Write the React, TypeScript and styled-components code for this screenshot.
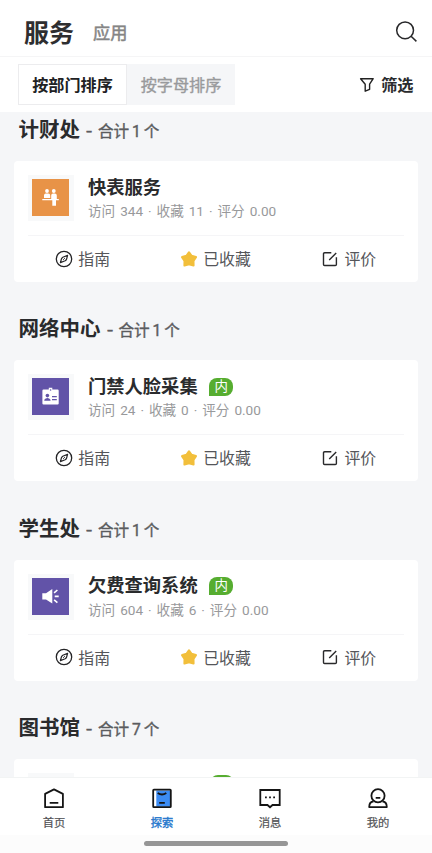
import React from 'react';
import styled, { createGlobalStyle } from 'styled-components';

const GlobalStyle = createGlobalStyle`
  * { box-sizing: border-box; }
  body { margin: 0; background: #f5f6f8; }
`;

const Screen = styled.div`
  width: 432px;
  height: 853px;
  display: flex;
  flex-direction: column;
  overflow: hidden;
  background: #f5f6f8;
  color: #2a2b2d;
  font-family: Roboto, "Noto Sans CJK SC", sans-serif;
  white-space: nowrap;
  svg { display: block; flex: none; }
`;

const Header = styled.header`
  height: 57px;
  flex: none;
  display: flex;
  align-items: center;
  padding: 9px 14px 0 24px;
  background: #fff;
  border-bottom: 1px solid #f5f5f6;
`;

const HeaderTitle = styled.h1`
  margin: 0;
  padding-top: 3px;
  font-size: 25px;
  line-height: 36px;
  font-weight: 700;
  color: #2e2e30;
`;

const HeaderTab = styled.span`
  margin-left: 19px;
  padding-top: 1px;
  flex: 1;
  font-size: 17.2px;
  line-height: 26px;
  color: #858585;
  -webkit-text-stroke: 0.5px;
`;

const FilterBar = styled.div`
  height: 55px;
  flex: none;
  display: flex;
  align-items: center;
  justify-content: space-between;
  padding: 0 18.5px 0 18px;
  background: #fff;
`;

const Segments = styled.div`
  display: flex;
`;

const Segment = styled.button<{ $active?: boolean }>`
  width: ${(p) => (p.$active ? 109 : 108)}px;
  height: 41px;
  padding: 0 0 1px;
  border: 1px solid ${(p) => (p.$active ? '#ececee' : '#f5f6f8')};
  background: ${(p) => (p.$active ? '#fff' : '#f5f6f8')};
  color: ${(p) => (p.$active ? '#202123' : '#999a9c')};
  font: ${(p) => (p.$active ? 700 : 400)} 16.1px Roboto, "Noto Sans CJK SC", sans-serif;
  -webkit-text-stroke: ${(p) => (p.$active ? 0 : 0.4)}px;
`;

const FilterButton = styled.div`
  display: flex;
  align-items: center;
  gap: 6px;
  padding-bottom: 1px;
  font-size: 16.2px;
  font-weight: 700;
  svg { margin-top: 1px; }
`;

const List = styled.main`
  flex: 1;
  min-height: 0;
  overflow: hidden;
`;

const Section = styled.section`
  height: 199.3px;
`;

const SectionHead = styled.h2`
  height: 49px;
  margin: 0;
  padding: 4px 0 0 18.5px;
  display: flex;
  align-items: baseline;
  font-size: 20.5px;
  line-height: 29px;
  font-weight: 700;
`;

const Count = styled.span`
  display: flex;
  align-items: baseline;
  font-size: 15.6px;
  font-weight: 400;
  color: #5b5c5f;
  -webkit-text-stroke: 0.4px;
`;

const Dash = styled.span`
  width: 18px;
  text-align: center;
  transform: scaleX(1.3);
`;

const Digit = styled.b`
  width: 14.5px;
  text-align: center;
  font-weight: 400;
`;

const Card = styled.article`
  height: 121px;
  margin: 0 14px;
  padding: 0 14px;
  border-radius: 4px;
  background: #fff;
`;

const CardTop = styled.div`
  display: flex;
  height: 75px;
  padding-top: 14px;
  border-bottom: 1px solid #f5f5f7;
`;

const IconFrame = styled.div`
  width: 46px;
  height: 46px;
  flex: none;
  padding: 4px;
  background: #f8f9fa;
`;

const IconTile = styled.div<{ $color: string }>`
  width: 37px;
  height: 37px;
  background: ${(p) => p.$color};
`;

const Info = styled.div`
  margin-left: 14px;
`;

const TitleRow = styled.div`
  display: flex;
  align-items: center;
  height: 25px;
  font-size: 18.3px;
  line-height: 26px;
  font-weight: 700;
`;

const Badge = styled.span`
  width: 24px;
  height: 18px;
  margin-left: 11.5px;
  border-radius: 8px 8px 8px 0;
  background: #56ad30;
  color: #fff;
  font-size: 13.5px;
  font-weight: 400;
  line-height: 17px;
  text-align: center;
`;

const Meta = styled.div`
  height: 22px;
  font-size: 13.6px;
  line-height: 22px;
  word-spacing: 1.6px;
  color: #98999b;
`;

const Actions = styled.div`
  display: grid;
  grid-template-columns: repeat(3, 1fr);
  height: 46px;
`;

const Action = styled.div`
  display: flex;
  align-items: center;
  justify-content: center;
  gap: 5px;
  padding: 0 16px 1px 0;
  font-size: 15.9px;
  color: #55565a;
  &:nth-child(2) { padding-right: 1px; padding-left: 0; }
  &:nth-child(3) { gap: 6px; padding-right: 0; padding-left: 16px; }
`;

const Nav = styled.nav`
  height: 58px;
  flex: none;
  display: grid;
  grid-template-columns: repeat(4, 1fr);
  background: #fff;
  border-top: 1px solid #f2f4f4;
`;

const NavItem = styled.div<{ $active?: boolean }>`
  display: flex;
  flex-direction: column;
  align-items: center;
  padding-top: 9px;
  font-size: 11.3px;
  line-height: 16px;
  color: ${(p) => (p.$active ? '#2879cd' : '#525356')};
  -webkit-text-stroke: ${(p) => (p.$active ? 0.4 : 0.2)}px;
  svg { margin-bottom: 7px; }
`;

const HomeArea = styled.div`
  height: 18px;
  flex: none;
  display: flex;
  justify-content: center;
  padding-top: 6px;
  background: #fcfcfc;
`;

const HomeBar = styled.div`
  width: 144px;
  height: 5px;
  border-radius: 3px;
  background: #969696;
`;

const SearchIcon = () => (
  <svg width="24" height="24" viewBox="0 0 24 24" fill="none" stroke="#28282a" strokeWidth="1.5">
    <circle cx="11.1" cy="9.3" r="8.4" />
    <path d="M17.1 15.3 22.4 20.4" />
  </svg>
);

const FunnelIcon = () => (
  <svg width="16" height="16" viewBox="0 0 16 16" fill="none" stroke="#222" strokeWidth="1.4" strokeLinejoin="round">
    <path d="M1.6 1.7H14.2L10.6 7.2V12.3L6.2 14.2V7.2Z" />
  </svg>
);

const CompassIcon = () => (
  <svg width="18" height="18" viewBox="0 0 18 18" fill="none" stroke="#252527" strokeWidth="1.3">
    <circle cx="9" cy="9" r="7.7" />
    <path d="M12.6 5.4 7.8 7.2Q6.7 7.9 6.4 9L5.4 12.6 10.2 10.8Q11.3 10.1 11.6 9Z" strokeLinejoin="round" strokeWidth="1.2" />
    <path d="M8 10 10 8" strokeWidth=".8" />
  </svg>
);

const StarIcon = () => (
  <svg width="18" height="18" viewBox="0 0 18 18" fill="#f2bf3b" stroke="#f2bf3b" strokeWidth="2.2" strokeLinejoin="round">
    <path d="M9 2.3 11.5 5.9 15.9 7.1 13.4 10.9 13.5 15.5 9 14.3 4.5 15.5 4.6 10.9 2.1 7.1 6.5 5.9Z" />
  </svg>
);

const EditIcon = () => (
  <svg width="16" height="16" viewBox="0 0 16 16" fill="none" stroke="#29292b" strokeWidth="1.4">
    <path d="M9.3 1.8H2.6Q1.5 1.8 1.5 2.9V13.4Q1.5 14.5 2.6 14.5H13.3Q14.4 14.5 14.4 13.4V6.2M7.2 9 14.2 2" />
  </svg>
);

type Glyph = 'people' | 'badge' | 'horn';

const TileGlyph = ({ kind }: { kind: Glyph }) => (
  <svg width="37" height="37" viewBox="0 0 37 37" fill="#fff">
    {kind === 'people' && (
      <>
        <circle cx="15" cy="12" r="1.9" />
        <circle cx="21.8" cy="12" r="1.9" />
        <path d="M12 18.9V16.5Q12 14.6 13.8 14.6H16.3Q18.2 14.6 18.2 16.5V18.9ZM10.3 20H19.2V16.5Q19.2 14.6 21 14.6H22.8Q24.8 14.6 24.8 16.5V20H26.8V21.3H24V26.8H20.3V21.3H10.3Z" />
      </>
    )}
    {kind === 'badge' && (
      <>
        <path d="M11.5 11.6H16.8V9.8H20.3V11.6H25.6Q26.7 11.6 26.7 12.7V25.5Q26.7 26.6 25.6 26.6H11.5Q10.4 26.6 10.4 25.5V12.7Q10.4 11.6 11.5 11.6Z" />
        <g fill="#6253a8">
          <circle cx="18.6" cy="12" r=".8" />
          <circle cx="15.4" cy="17.6" r="1.8" />
          <path d="M12.3 22.7V21.8Q13.5 20 15.4 20T18.5 21.8V22.7ZM20 18H24.8V19.3H20ZM20 21H24.8V22.3H20Z" />
        </g>
      </>
    )}
    {kind === 'horn' && (
      <>
        <path d="M10.3 15.2H14L20.3 11V25.5L14 21.6H10.3Z" />
        <path d="M22.1 14.9 25.4 12M22.7 18.4H26.7M22.1 21.9 25.4 24.7" stroke="#fff" strokeWidth="1.6" />
      </>
    )}
  </svg>
);

const HomeIcon = () => (
  <svg width="22" height="22" viewBox="0 0 22 22" fill="none" stroke="#151515" strokeWidth="1.8">
    <path d="M2.1 20.2V6.9L11 2.4 19.9 6.9V20.2ZM6.7 15.9H15.3" strokeLinejoin="round" />
  </svg>
);

const ExploreIcon = () => (
  <svg width="22" height="22" viewBox="0 0 22 22" fill="none" stroke="#151515" strokeWidth="1.8">
    <path d="M5.3 3.5H19V19.7H5.3Z" fill="#3c8cf4" stroke="none" />
    <rect x="2.2" y="2.6" width="17.6" height="17.6" rx=".7" />
    <path d="M6.7 6Q11 9 15.3 6M8.2 15.9H13.8" />
  </svg>
);

const MessageIcon = () => (
  <svg width="24" height="22" viewBox="0 0 24 22" fill="none" stroke="#151515" strokeWidth="1.8">
    <path d="M2.3 3H21.7V18H14.5L12 20.2 9.5 18H2.3Z" />
    <path d="M7 10.4H8.8M11.1 10.4H12.9M15.2 10.4H17" />
  </svg>
);

const ProfileIcon = () => (
  <svg width="22" height="22" viewBox="0 0 22 22" fill="none" stroke="#151515" strokeWidth="1.8" strokeLinejoin="round">
    <circle cx="11" cy="8.8" r="6.6" />
    <path d="M6.5 14.5Q2.2 14.6 2.2 20.1H19.8Q19.8 14.6 15.5 14.5M8.7 10.8H13.3" />
  </svg>
);

interface Service {
  dept: string;
  count: number;
  name: string;
  meta: string;
  internal?: boolean;
  color: string;
  glyph: Glyph;
}

const services: Service[] = [
  { dept: '计财处', count: 1, name: '快表服务', meta: '访问 344 · 收藏 11 · 评分 0.00', color: '#e89347', glyph: 'people' },
  { dept: '网络中心', count: 1, name: '门禁人脸采集', meta: '访问 24 · 收藏 0 · 评分 0.00', internal: true, color: '#6253a8', glyph: 'badge' },
  { dept: '学生处', count: 1, name: '欠费查询系统', meta: '访问 604 · 收藏 6 · 评分 0.00', internal: true, color: '#6253a8', glyph: 'horn' },
];

const PeekBadge = styled(Badge)`
  margin: 2px 0 0 136px;
`;

const DeptHeading = ({ dept, count }: { dept: string; count: number }) => (
  <SectionHead>
    {dept}
    <Count><Dash>-</Dash>合计<Digit>{count}</Digit>个</Count>
  </SectionHead>
);

export default function App() {
  return (
    <Screen>
      <GlobalStyle />
      <Header>
        <HeaderTitle>服务</HeaderTitle>
        <HeaderTab>应用</HeaderTab>
        <SearchIcon />
      </Header>
      <FilterBar>
        <Segments>
          <Segment $active>按部门排序</Segment>
          <Segment>按字母排序</Segment>
        </Segments>
        <FilterButton><FunnelIcon />筛选</FilterButton>
      </FilterBar>
      <List>
        {services.map((s) => (
          <Section key={s.dept}>
            <DeptHeading dept={s.dept} count={s.count} />
            <Card>
              <CardTop>
                <IconFrame>
                  <IconTile $color={s.color}><TileGlyph kind={s.glyph} /></IconTile>
                </IconFrame>
                <Info>
                  <TitleRow>{s.name}{s.internal && <Badge>内</Badge>}</TitleRow>
                  <Meta>{s.meta}</Meta>
                </Info>
              </CardTop>
              <Actions>
                <Action><CompassIcon />指南</Action>
                <Action><StarIcon />已收藏</Action>
                <Action><EditIcon />评价</Action>
              </Actions>
            </Card>
          </Section>
        ))}
        <Section>
          <DeptHeading dept="图书馆" count={7} />
          <Card>
            <CardTop><IconFrame /><PeekBadge /></CardTop>
          </Card>
        </Section>
      </List>
      <Nav>
        <NavItem><HomeIcon />首页</NavItem>
        <NavItem $active><ExploreIcon />探索</NavItem>
        <NavItem><MessageIcon />消息</NavItem>
        <NavItem><ProfileIcon />我的</NavItem>
      </Nav>
      <HomeArea><HomeBar /></HomeArea>
    </Screen>
  );
}
